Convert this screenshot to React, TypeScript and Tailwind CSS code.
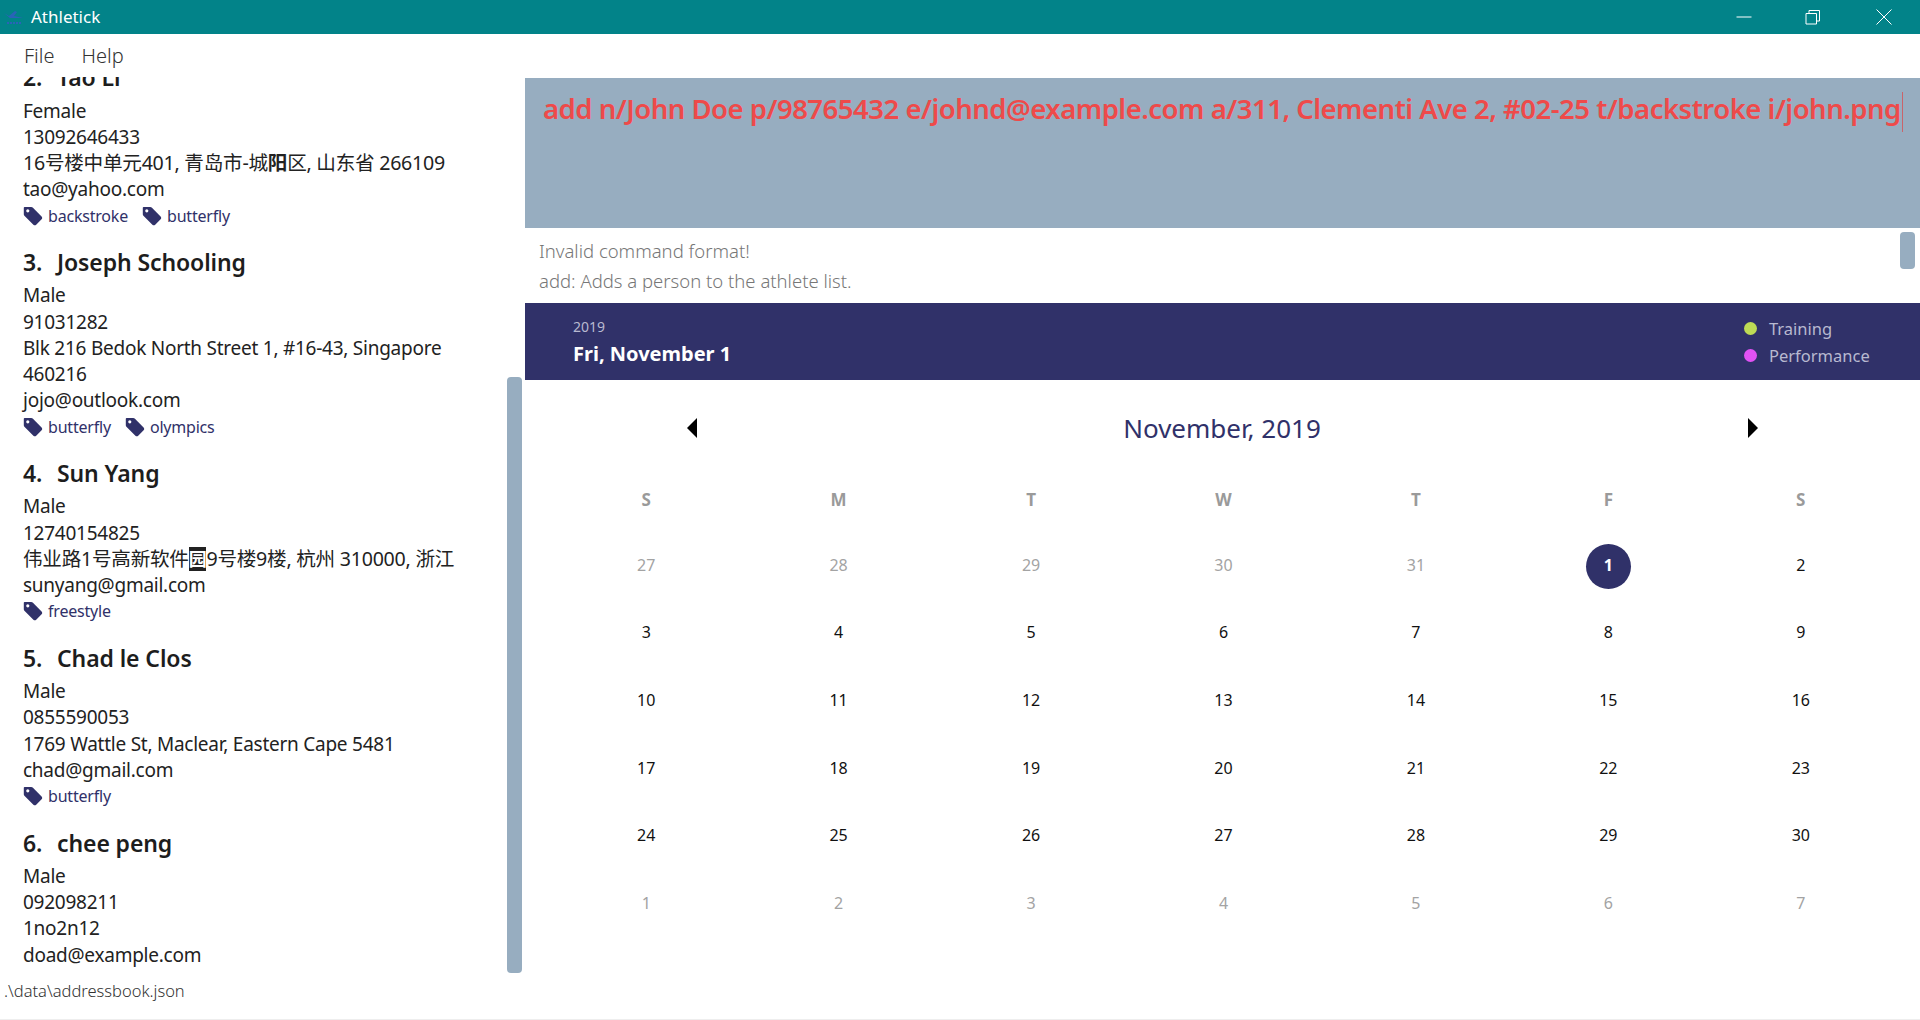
import React from 'react';

const people = [
  {
    no: 2,
    name: 'Tao Li',
    gender: 'Female',
    phone: '13092646433',
    address: [<span className="text-[19.600px]">16号楼中单元401, 青岛市-城<b>阳</b>区, 山东省 266109</span>],
    email: 'tao@yahoo.com',
    tags: ['backstroke', 'butterfly'],
  },
  {
    no: 3,
    name: 'Joseph Schooling',
    gender: 'Male',
    phone: '91031282',
    address: ['Blk 216 Bedok North Street 1, #16-43, Singapore', '460216'],
    email: 'jojo@outlook.com',
    tags: ['butterfly', 'olympics'],
  },
  {
    no: 4,
    name: 'Sun Yang',
    gender: 'Male',
    phone: '12740154825',
    address: [<span className="text-[19.600px]">伟业路1号高新软件<span className="bg-[#222] text-white font-bold text-[18px]">园</span>9号楼9楼, 杭州 310000, 浙江</span>],
    email: 'sunyang@gmail.com',
    tags: ['freestyle'],
  },
  {
    no: 5,
    name: 'Chad le Clos',
    gender: 'Male',
    phone: '0855590053',
    address: ['1769 Wattle St, Maclear, Eastern Cape 5481'],
    email: 'chad@gmail.com',
    tags: ['butterfly'],
  },
  {
    no: 6,
    name: 'chee peng',
    gender: 'Male',
    phone: '092098211',
    address: ['1no2n12'],
    email: 'doad@example.com',
    tags: [],
  },
];

const weeks = [
  [27, 28, 29, 30, 31, 1, 2],
  [3, 4, 5, 6, 7, 8, 9],
  [10, 11, 12, 13, 14, 15, 16],
  [17, 18, 19, 20, 21, 22, 23],
  [24, 25, 26, 27, 28, 29, 30],
  [1, 2, 3, 4, 5, 6, 7],
];

function TagIcon() {
  return (
    <svg width="20" height="20" viewBox="0 0 20 20" className="shrink-0">
      <path
        fillRule="evenodd"
        d="M1.600 1h6.600c.6 0 1.100.2 1.500.6l8.900 8.900c.8.8.8 2 0 2.800l-5.400 5.400c-.8.8-2 .8-2.800 0L1.400 9.700C1 9.300.8 8.800.8 8.200V1.800c0-.5.3-.8.8-.8zM4.800 3.200a1.600 1.600 0 1 0 0 3.200 1.600 1.600 0 0 0 0-3.200z"
        fill="#303169"
      />
    </svg>
  );
}

function PersonCard({ person }: { person: (typeof people)[number] }) {
  return (
    <div className="pl-[23px] pb-[13.500px] text-[19px] leading-[26.250px] tracking-[-0.25px] text-[#222]">
      <div className="flex h-[40px] items-center text-[23px] font-semibold tracking-[-0.1px] text-[#1d1d1d]">
        <span className="w-[34px]">{person.no}.</span>
        <span>{person.name}</span>
      </div>
      <div>{person.gender}</div>
      <div>{person.phone}</div>
      {person.address.map((line, i) => (
        <div key={i}>{line}</div>
      ))}
      <div>{person.email}</div>
      {person.tags.length > 0 && (
        <div className="flex h-[26.250px] items-center gap-[14px]">
          {person.tags.map((t) => (
            <div key={t} className="flex items-center gap-[5px]">
              <TagIcon />
              <span className="text-[16px] tracking-[-0.2px] text-[#303169]">{t}</span>
            </div>
          ))}
        </div>
      )}
    </div>
  );
}

export default function App() {
  return (
    <div className="flex h-[1020px] w-[1920px] flex-col overflow-hidden border-b border-[#eeeeee] bg-white font-['Noto_Sans','Noto_Sans_CJK_SC',sans-serif]">
      {/* title bar */}
      <div className="flex h-[34px] shrink-0 items-center justify-between bg-[#028389] text-white">
        <div className="flex items-center">
          <svg width="22" height="16" viewBox="0 0 22 16" className="ml-[3px] mr-[6px]">
            <path d="M1 4l5 3 6-5 2 1-3 4 9 2H7z" fill="#2a63b8" />
            <path d="M4 14h14" stroke="#2a63b8" strokeWidth="2" strokeDasharray="2 1" />
          </svg>
          <span className="text-[17px]">Athletick</span>
        </div>
        <div className="flex items-center">
          <svg width="16" height="16" viewBox="0 0 16 16" className="mr-[53px]">
            <path d="M0.500 8h15" stroke="white" />
          </svg>
          <svg width="16" height="16" viewBox="0 0 16 16" className="mr-[55px]">
            <path d="M1 4.500h10.500v10.500H1z M4 4.500V1.500h10.500V12h-3" stroke="white" fill="none" />
          </svg>
          <svg width="16" height="16" viewBox="0 0 16 16" className="mr-[28px]">
            <path d="M0.500 0.500l15 15M15.500 0.500l-15 15" stroke="white" />
          </svg>
        </div>
      </div>

      <div className="flex min-h-0 flex-1">
        {/* left column */}
        <div className="flex w-[525px] shrink-0 flex-col">
          <div className="flex h-[43px] shrink-0 items-center gap-[27px] pl-6 text-[20px] font-light text-[#333]">
            <span>File</span>
            <span>Help</span>
          </div>
          <div className="relative min-h-0 flex-1 overflow-hidden">
            <div className="-mt-[19.500px]">
              {people.map((p) => (
                <PersonCard key={p.no} person={p} />
              ))}
            </div>
            <div className="absolute right-[3px] top-[300px] h-[596px] w-[15px] rounded-[4px] bg-[#97adc0]" />
          </div>
          <div className="flex h-[40px] shrink-0 items-start pl-[4px] pt-[1px] text-[16.500px] font-light leading-[22px] text-[#333]">
            .\data\addressbook.json
          </div>
        </div>

        {/* right column */}
        <div className="flex min-w-0 flex-1 flex-col">
          <div className="h-[44px] shrink-0" />
          <div className="relative h-[150px] shrink-0 overflow-hidden whitespace-nowrap bg-[#97adc0] pl-[18px] pt-[12px] text-[27.500px] font-semibold leading-[38px] tracking-[-0.500px] text-[#ee4a4a]">
            add n/John Doe p/98765432 e/johnd@example.com a/311, Clementi Ave 2, #02-25 t/backstroke i/john.png
            <span className="ml-[1px] inline-block h-[40px] w-[1px] bg-[#c9646a] align-middle" />
          </div>
          <div className="relative h-[75px] shrink-0 pl-[14px] pt-[8px] text-[18.500px] font-light leading-[30px] text-[#777]">
            <div>Invalid command format!</div>
            <div>add: Adds a person to the athlete list.</div>
            <div className="absolute right-[5px] top-[4px] h-[37px] w-[15px] rounded-[4px] bg-[#97adc0]" />
          </div>
          <div className="flex h-[77px] shrink-0 items-center justify-between bg-[#303169] pl-[48px] pr-[49px]">
            <div>
              <div className="pt-[1px] text-[14px] leading-[20px] text-[#b8b9d0]">2019</div>
              <div className="mt-[3px] text-[20px] font-bold leading-[28px] text-white">Fri, November 1</div>
            </div>
            <div className="w-[127px] text-[16.500px] leading-[27px] text-[#b8b9d0]">
              <div className="flex items-center gap-[12px]">
                <span className="h-[13px] w-[13px] rounded-full bg-[#bedb55]" />
                Training
              </div>
              <div className="flex items-center gap-[12px]">
                <span className="h-[13px] w-[13px] rounded-full bg-[#e152f4]" />
                Performance
              </div>
            </div>
          </div>

          {/* calendar */}
          <div className="flex h-[91px] shrink-0 items-center justify-between pt-[5px] pl-[161px] pr-[161px]">
            <svg width="12" height="20" viewBox="0 0 12 20">
              <path d="M11 0v20L1 10z" fill="black" />
            </svg>
            <span className="-ml-[1px] text-[26px] text-[#303169]">November, 2019</span>
            <svg width="12" height="20" viewBox="0 0 12 20">
              <path d="M1 0v20l10-10z" fill="black" />
            </svg>
          </div>
          <div className="grid grid-cols-7 pl-[25px] pr-[23px]">
            {['S', 'M', 'T', 'W', 'T', 'F', 'S'].map((d, i) => (
              <div key={i} className="flex h-[60px] items-center justify-center pb-[3px] text-[17px] font-bold text-[#9a9a9a]">
                {d}
              </div>
            ))}
            {weeks.map((week, r) =>
              week.map((day, c) => {
                const outside = r === 5 || (r === 0 && c < 5);
                const selected = r === 0 && c === 5;
                return (
                  <div key={`${r}-${c}`} className="flex h-[67.600px] items-center justify-center text-[16px]">
                    {selected ? (
                      <span className="mt-[4px] flex h-[45px] w-[45px] items-center justify-center rounded-full bg-[#303169] pb-[3px] font-bold text-white">
                        {day}
                      </span>
                    ) : (
                      <span className={outside ? 'text-[#a3a3a3]' : 'text-[#111]'}>{day}</span>
                    )}
                  </div>
                );
              })
            )}
          </div>
        </div>
      </div>
    </div>
  );
}
